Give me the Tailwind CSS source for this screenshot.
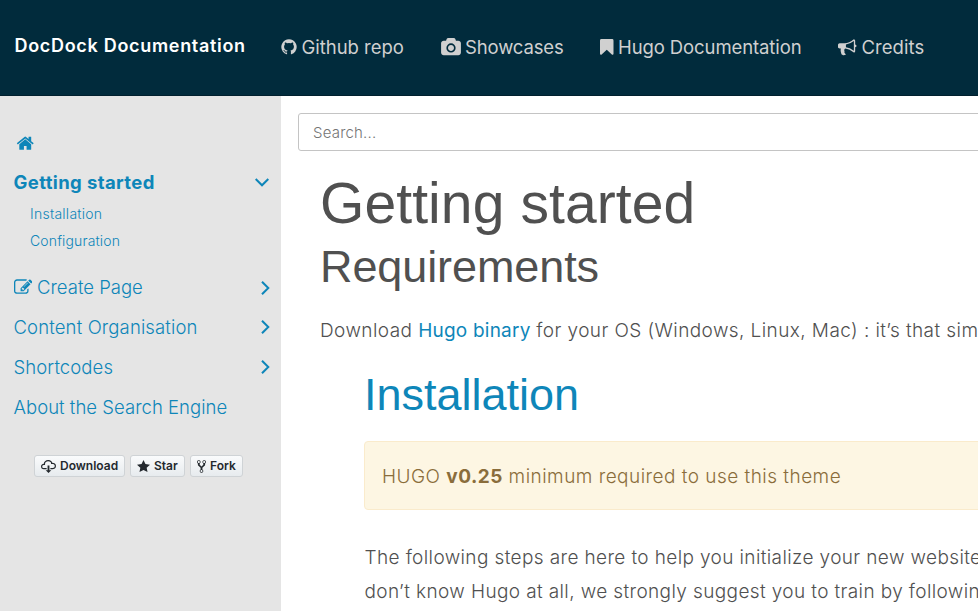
<!DOCTYPE html>
<html lang="en">
<head>
<meta charset="utf-8">
<title>DocDock Documentation</title>
<script src="https://cdn.jsdelivr.net/npm/@tailwindcss/browser@4"></script>
</head>
<body class="w-[978px] h-[611px] overflow-hidden bg-white font-['Inter',sans-serif] text-[#505050]">
<header class="grid grid-cols-[281px_160px_159px_238px_1fr] items-start h-24 bg-[#012b3c] border-b border-[#01202e] whitespace-nowrap text-[18.5px] leading-6 text-[#d0d0d0]">
  <a class="pl-[14.500px] pt-[34px] text-[18px] font-semibold tracking-[0.69px] text-white">DocDock Documentation</a>
  <a class="flex pt-[35px]">
    <svg class="w-[18px] h-[18px] -ml-[1.500px] mt-[3px] mr-[4px]" viewBox="0 0 1792 1792" fill="currentColor"><path d="M896 128q209 0 385.5 103t279.5 279.5 103 385.5q0 251-146.5 451.5t-378.5 277.5q-27 5-40-7t-13-30q0-3 .5-76.5t.5-134.5q0-97-52-142 57-6 102.5-18t94-39 81-66.5 53-105 20.5-150.5q0-119-79-206 37-91-8-204-28-9-81 11t-92 44l-38 24q-93-26-192-26t-192 26q-16-11-42.5-27t-83.5-38.5-85-13.5q-45 113-8 204-79 87-79 206 0 85 20.500 150t52.500 105 80.500 67 94 39 102.500 18q-39 36-49 103-21 10-45 15t-57 5-65.500-21.500-55.500-62.500q-19-32-48.500-52t-49.500-24l-20-3q-21 0-29 4.500t-5 11.500 9 14 13 12l7 5q22 10 43.500 38t31.500 51l10 23q13 38 44 61.500t67 30 69.500 7 55.500-3.500l23-4q0 38 .5 88.500t.5 54.500q0 18-13 30t-40 7q-232-77-378.500-277.500t-146.500-451.500q0-209 103-385.500t279.500-279.500 385.500-103z"/></svg>
    <span class="tracking-[-0.03px]">Github repo</span>
  </a>
  <a class="flex pt-[35px]">
    <svg class="w-[20px] h-[18.5px] mt-[3px] mr-[4px]" viewBox="0 0 1920 1792" fill="currentColor"><path d="M960 672q119 0 203.500 84.500t84.500 203.500-84.500 203.500-203.500 84.500-203.500-84.500-84.500-203.500 84.500-203.500 203.500-84.500zm704-416q106 0 181 75t75 181v896q0 106-75 181t-181 75h-1408q-106 0-181-75t-75-181v-896q0-106 75-181t181-75h224l51-136q19-49 69.500-84.500t103.500-35.500h512q53 0 103.500 35.500t69.500 84.500l51 136h224zm-704 1152q185 0 316.500-131.500t131.500-316.500-131.500-316.500-316.500-131.500-316.500 131.500-131.500 316.500 131.500 316.500 316.500 131.500z"/></svg>
    <span class="tracking-[-0.13px]">Showcases</span>
  </a>
  <a class="flex pt-[35px]">
    <svg class="w-[13.500px] h-[16px] mt-[4px] mr-[4.500px]" viewBox="0 0 13.5 16" fill="currentColor"><path d="M1.400 0H12.100Q13.500 0 13.500 1.400V14.700Q13.500 16 12.100 15.700L6.750 10.700L1.400 15.700Q0 16 0 14.700V1.400Q0 0 1.400 0Z"/></svg>
    <span class="tracking-[-0.1px]">Hugo Documentation</span>
  </a>
  <a class="flex pt-[35px]">
    <svg class="w-[18.500px] h-[18.500px] mt-[3px] mr-[5px]" viewBox="0 0 1792 1792" fill="currentColor"><path d="M1664 640q53 0 90.500 37.500t37.500 90.500-37.500 90.500-90.500 37.500v384q0 52-38 90t-90 38q-417-347-812-380-58 19-91 66t-31 100.500 40 92.500q-20 33-23 65.500t6 58 33.500 55 48 50 61.500 50.500q-29 58-111.500 83t-168.500 11.500-132-55.500q-7-23-29.500-87.500t-32-94.500-23-89-15-101 3.500-98.500 22-110.500h-122q-66 0-113-47t-47-113v-192q0-66 47-113t113-47h480q435 0 896-384 52 0 90 38t38 90v384zm-128 604v-954q-394 302-768 343v270q377 42 768 341z"/></svg>
    <span class="tracking-[0.05px]">Credits</span>
  </a>
</header>
<div class="flex h-[515px]">
  <aside class="w-[281px] shrink-0 bg-[#e5e5e5] text-[#0e86b9] whitespace-nowrap">
    <a class="block pt-[38px] pl-[16px] h-[73px]">
      <svg class="w-[18.500px] h-[18.500px]" viewBox="0 0 1792 1792" fill="currentColor"><path d="M1472 992v480q0 26-19 45t-45 19h-384v-384h-256v384h-384q-26 0-45-19t-19-45v-480q0-1 .5-3t.5-3l575-474 575 474q1 2 1 6zm223-69l-62 74q-8 9-21 11h-3q-13 0-21-7l-692-577-692 577q-12 8-24 7-13-2-21-11l-62-74q-8-10-7-23.500t11-21.500l719-599q32-26 76-26t76 26l244 204v-195q0-14 9-23t23-9h192q14 0 23 9t9 23v408l219 182q10 8 11 21.500t-7 23.500z"/></svg>
    </a>
    <div class="flex justify-between items-center h-[31px] pb-[4px] pl-[13.500px] pr-[12px] text-[18.500px] leading-[27px] font-bold tracking-[0.38px]">
      <a>Getting started</a>
      <svg class="w-[14px] h-[9px]" viewBox="0 0 14 9" fill="none" stroke="currentColor" stroke-width="2"><path d="M.7 1L7 7.300L13.300 1"/></svg>
    </div>
    <div class="pl-[30px] h-[67px] text-[14px] leading-[27px] font-light">
      <a class="block tracking-[0.25px]">Installation</a>
      <a class="block tracking-[0.14px]">Configuration</a>
    </div>
    <nav class="text-[18.5px] leading-10 font-light">
      <a class="flex items-center justify-between pl-[13.500px] pr-[11.500px]"><span class="flex items-center"><svg class="w-[18.500px] h-[18.500px] mr-[5px] mt-px" viewBox="0 0 1792 1792" fill="currentColor"><path d="M888 1184l116-116-152-152-116 116v56h96v96h56zm440-720q-16-16-33 1l-350 350q-17 17-1 33t33-1l350-350q17-17 1-33zm80 594v190q0 119-84.500 203.500t-203.500 84.500h-832q-119 0-203.500-84.500t-84.500-203.500v-832q0-119 84.500-203.500t203.500-84.500h832q63 0 117 25 15 7 18 23 3 17-9 29l-49 49q-14 14-32 8-23-6-45-6h-832q-66 0-113 47t-47 113v832q0 66 47 113t113 47h832q66 0 113-47t47-113v-126q0-13 9-22l64-64q15-15 35-7t20 29zm-96-738l288 288-672 672h-288v-288zm444 132l-92 92-288-288 92-92q28-28 68-28t68 28l152 152q28 28 28 68t-28 68z"/></svg>Create Page</span><svg class="w-[9px] h-[14px] mt-[2px]" viewBox="0 0 9 14" fill="none" stroke="currentColor" stroke-width="2"><path d="M1 .7L7.300 7L1 13.300"/></svg></a>
      <a class="flex items-center justify-between pl-[13.500px] pr-[11.500px] tracking-[0.14px]">Content Organisation<svg class="w-[9px] h-[14px]" viewBox="0 0 9 14" fill="none" stroke="currentColor" stroke-width="2"><path d="M1 .7L7.300 7L1 13.300"/></svg></a>
      <a class="flex items-center justify-between pl-[13.500px] pr-[11.500px] tracking-[0.1px]">Shortcodes<svg class="w-[9px] h-[14px]" viewBox="0 0 9 14" fill="none" stroke="currentColor" stroke-width="2"><path d="M1 .7L7.300 7L1 13.300"/></svg></a>
      <a class="block pl-[13.500px] tracking-[0.03px]">About the Search Engine</a>
    </nav>
    <div class="flex gap-[5px] pl-[34px] pt-[28px] text-[12px] leading-5 font-semibold text-[#24292e]">
      <a class="flex items-center w-[91px] h-[22px] pl-[6px] rounded-[3px] border border-[#cfd3d6] bg-linear-to-b from-[#fafbfc] to-[#e7ebee]"><svg class="w-[15px] h-[15px] mr-[4px]" viewBox="0 0 16 16" fill="currentColor"><path d="M9 12h2l-3 3-3-3h2V7h2v5zm3-8c0-.44-.91-3-4.500-3C5.080 1 3 2.920 3 5 1.020 5 0 6.520 0 8c0 1.530 1 3 3 3h3V9.700H3C1.380 9.700 1.300 8.280 1.300 8c0-.17.05-1.700 1.700-1.700h1.300V5c0-1.390 1.560-2.700 3.200-2.700 2.550 0 3.130 1.550 3.200 1.800v1.200H12c.81 0 2.700.22 2.700 2.200 0 2.090-2.250 2.200-2.700 2.200h-2V11h2c2.080 0 4-1.160 4-3.500C16 5.060 14.080 4 12 4z"/></svg>Download</a>
      <a class="flex items-center w-[55px] h-[22px] pl-[6px] rounded-[3px] border border-[#cfd3d6] bg-linear-to-b from-[#fafbfc] to-[#e7ebee]"><svg class="w-[13px] h-[15px] mr-[4px]" viewBox="0 0 14 16" fill="currentColor"><path d="M14 6l-4.900-.64L7 1 4.900 5.360 0 6l3.600 3.260L2.670 14 7 11.670 11.330 14l-.93-4.740L14 6z"/></svg>Star</a>
      <a class="flex items-center w-[53px] h-[22px] pl-[6px] rounded-[3px] border border-[#cfd3d6] bg-linear-to-b from-[#fafbfc] to-[#e7ebee]"><svg class="w-[9px] h-[15px] mr-[4px]" viewBox="0 0 10 16" fill="currentColor"><path d="M8 1a1.993 1.993 0 0 0-1 3.720V6L5 8 3 6V4.720A1.993 1.993 0 0 0 2 1a1.993 1.993 0 0 0-1 3.720V6.500l3 3v1.780A1.993 1.993 0 0 0 5 15a1.993 1.993 0 0 0 1-3.720V9.500l3-3V4.720A1.993 1.993 0 0 0 8 1zM2 4.200C1.340 4.200.8 3.650.8 3c0-.65.55-1.200 1.200-1.200.65 0 1.200.55 1.200 1.200 0 .65-.55 1.200-1.200 1.200zm3 10c-.66 0-1.200-.55-1.200-1.200 0-.65.55-1.200 1.200-1.200.65 0 1.200.55 1.200 1.200 0 .65-.55 1.200-1.200 1.200zm3-10c-.66 0-1.200-.55-1.200-1.200 0-.65.55-1.200 1.200-1.200.65 0 1.200.55 1.200 1.200 0 .65-.55 1.200-1.200 1.200z"/></svg>Fork</a>
    </div>
  </aside>
  <main class="w-[697px] overflow-hidden whitespace-nowrap pt-[17px] text-[19px] leading-[34px] font-light tracking-[0.42px]">
    <div class="ml-[17px] w-[720px] h-[38px] pt-px pl-[14px] border border-[#c4c4c4] rounded-[3px] text-[15px] leading-9 tracking-[0.2px] text-[#757575]">Search...</div>
    <div class="pl-[39px]">
      <h1 class="mt-[20px] text-[57px] leading-[64px] font-normal tracking-[0.1px] font-['Liberation_Sans',Arial,sans-serif]">Getting started</h1>
      <h2 class="mt-[5px] text-[45px] leading-[54px] font-normal tracking-[-0.1px] font-['Liberation_Sans',Arial,sans-serif]">Requirements</h2>
      <p class="mt-[20px]">Download <a class="font-normal tracking-[0.22px] text-[#0e86b9]">Hugo binary</a> for your OS (Windows, Linux, Mac) : it’s that sim</p>
      <section class="pl-[44px]">
        <h2 class="mt-[20px] text-[45px] leading-[54px] font-normal tracking-[0px] text-[#0e86b9] font-['Liberation_Sans',Arial,sans-serif]">Installation</h2>
        <div class="mt-[19px] w-[700px] h-[69px] pt-[18px] pl-[17px] bg-[#fdf6e3] border border-[#faebcc] rounded-[4px] text-[#8a6d3b] tracking-[0.47px]">HUGO <b class="font-bold">v0.25</b> minimum required to use this theme</div>
        <p class="mt-[31px] pl-[0.500px] tracking-[0.38px]">The following steps are here to help you initialize your new website<br>don’t know Hugo at all, we strongly suggest you to train by following</p>
      </section>
    </div>
  </main>
</div>
</body>
</html>
